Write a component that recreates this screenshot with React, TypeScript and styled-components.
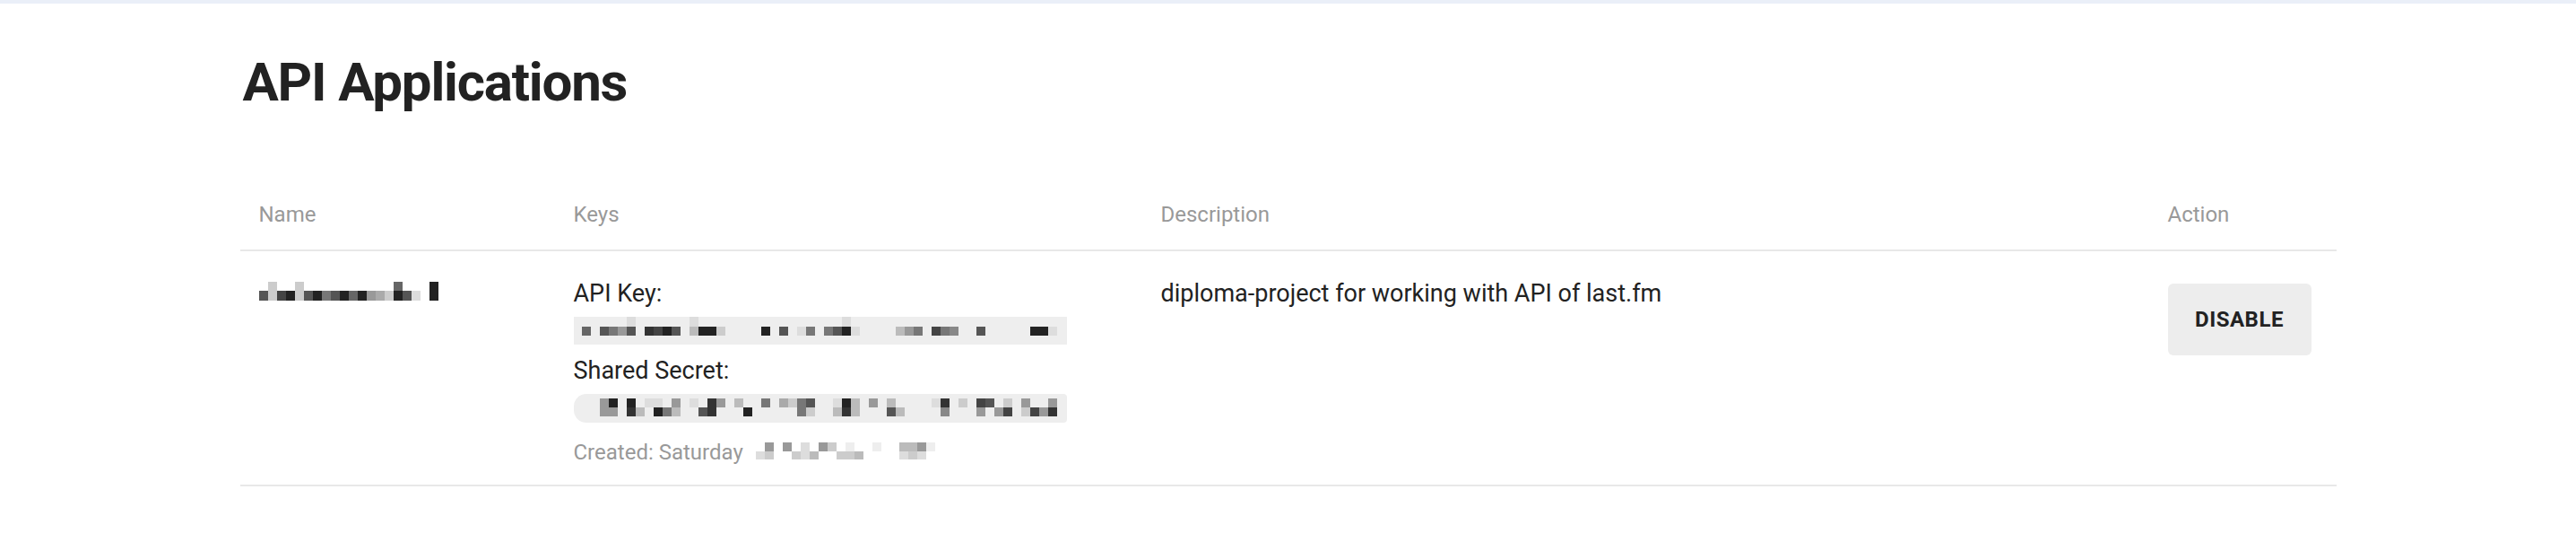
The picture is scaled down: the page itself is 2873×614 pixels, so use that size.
import React from "react";
import styled, { createGlobalStyle } from "styled-components";

const GlobalStyle = createGlobalStyle`
	html, body {
		margin: 0;
		padding: 0;
		background: #fff;
	}
	body {
		font-family: Roboto, "Liberation Sans", sans-serif;
		color: #222;
	}
`;

// pixelated (redacted) values: one char per 10px cell, "." = empty, hex digit = grey level
const nameMosaic = [".c..c..........6...2", "5c42c52752629ac25d.2"];
const keyMosaic = [
	".....d......d...........e....d...................ee...",
	"6.5795.3425.b22c....2.5.d7.752d....b97.478..5.....22d.",
];
const secretMosaic = [
	"..92.2.dd.9.d.39.b..7.ac75..d2b.9.b....d3.c.45ec.9ee9.",
	"..99.3be27b..53e..2ee...7c..b3b...5b....8...9.94.c493.",
];
const dateMosaic = ["..9.9.d.9c.e..e..bb9e", ".dc..cdb..ccb....dcd."];

const TopStrip = styled.div`
	height: 4px;
	background: #eaeff8;
`;

const Page = styled.main`
	width: 2338px;
	margin: 0 auto;
`;

const Title = styled.h1`
	margin: 52px 0 96px;
	padding-left: 3px;
	font-size: 60px;
	line-height: 72px;
	font-weight: 700;
	letter-spacing: -1.2px;
`;

const Row = styled.div<{ $head?: boolean }>`
	display: grid;
	grid-template-columns: 351px 655px 1123px 209px;
	border-bottom: 2px solid #e8e8e8;
	padding: ${({ $head }) => ($head ? "0 0 22.5px" : "29px 0 19.5px")};
`;

const HeadCell = styled.div`
	padding: 0 21px;
	font-size: 24px;
	line-height: 31.5px;
	color: #999;
`;

const Cell = styled.div`
	padding: 0 21px;
	font-size: 27px;
	line-height: 36px;
	display: flex;
	flex-direction: column;
	align-items: flex-start;
`;

const Label = styled.div<{ $gap?: number }>`
	margin-top: ${({ $gap }) => $gap || 0}px;
`;

const ValueBox = styled.div<{ $top: number; $round?: boolean }>`
	box-sizing: border-box;
	width: 550px;
	height: ${({ $round }) => ($round ? 32 : 31)}px;
	margin-top: 8px;
	padding: ${({ $top }) => $top}px 0 0 9px;
	background: #eee;
	border-radius: ${({ $round }) => ($round ? "14px 4px 4px 14px" : "0")};
`;

const Created = styled.div`
	margin-top: 18px;
	display: flex;
	align-items: flex-start;
	font-size: 24px;
	line-height: 31.5px;
	color: #999;
`;

const MosaicWrap = styled.div<{ $mt?: number; $ml?: number }>`
	display: flex;
	flex-direction: column;
	margin: ${({ $mt }) => $mt || 0}px 0 0 ${({ $ml }) => $ml || 0}px;
`;

const MosaicRow = styled.div<{ $h: number }>`
	display: flex;
	height: ${({ $h }) => $h}px;
`;

const Px = styled.span<{ $tone: string }>`
	width: 10px;
	height: 100%;
	flex: none;
	background: ${({ $tone }) => ($tone === "." ? "transparent" : `#${$tone}${$tone}${$tone}`)};
`;

const DisableButton = styled.button`
	width: 160px;
	height: 80px;
	margin-top: 7px;
	border: none;
	border-radius: 6px;
	background: #ededed;
	font-family: inherit;
	font-size: 24px;
	font-weight: 700;
	letter-spacing: 0.5px;
	color: #222;
	text-transform: uppercase;
	cursor: pointer;
`;

const Mosaic = ({ rows, heights, mt, ml }: { rows: string[]; heights: number[]; mt?: number; ml?: number }) => (
	<MosaicWrap $mt={mt} $ml={ml}>
		{rows.map((r, i) => (
			<MosaicRow key={i} $h={heights[i]}>
				{r.split("").map((c, j) => (
					<Px key={j} $tone={c} />
				))}
			</MosaicRow>
		))}
	</MosaicWrap>
);

export default function App() {
	return (
		<>
			<GlobalStyle />
			<TopStrip />
			<Page>
				<Title>API Applications</Title>
				<Row $head>
					<HeadCell>Name</HeadCell>
					<HeadCell>Keys</HeadCell>
					<HeadCell>Description</HeadCell>
					<HeadCell>Action</HeadCell>
				</Row>
				<Row>
					<Cell>
						<Mosaic rows={nameMosaic} heights={[10, 11]} mt={5} />
					</Cell>
					<Cell>
						<Label>API Key:</Label>
						<ValueBox $top={0}>
							<Mosaic rows={keyMosaic} heights={[11, 10]} />
						</ValueBox>
						<Label $gap={11}>Shared Secret:</Label>
						<ValueBox $top={5} $round>
							<Mosaic rows={secretMosaic} heights={[10, 10]} />
						</ValueBox>
						<Created>
							Created: Saturday
							<Mosaic rows={dateMosaic} heights={[10, 9]} mt={4} ml={4} />
						</Created>
					</Cell>
					<Cell>diploma-project for working with API of last.fm</Cell>
					<Cell>
						<DisableButton>Disable</DisableButton>
					</Cell>
				</Row>
			</Page>
		</>
	);
}
